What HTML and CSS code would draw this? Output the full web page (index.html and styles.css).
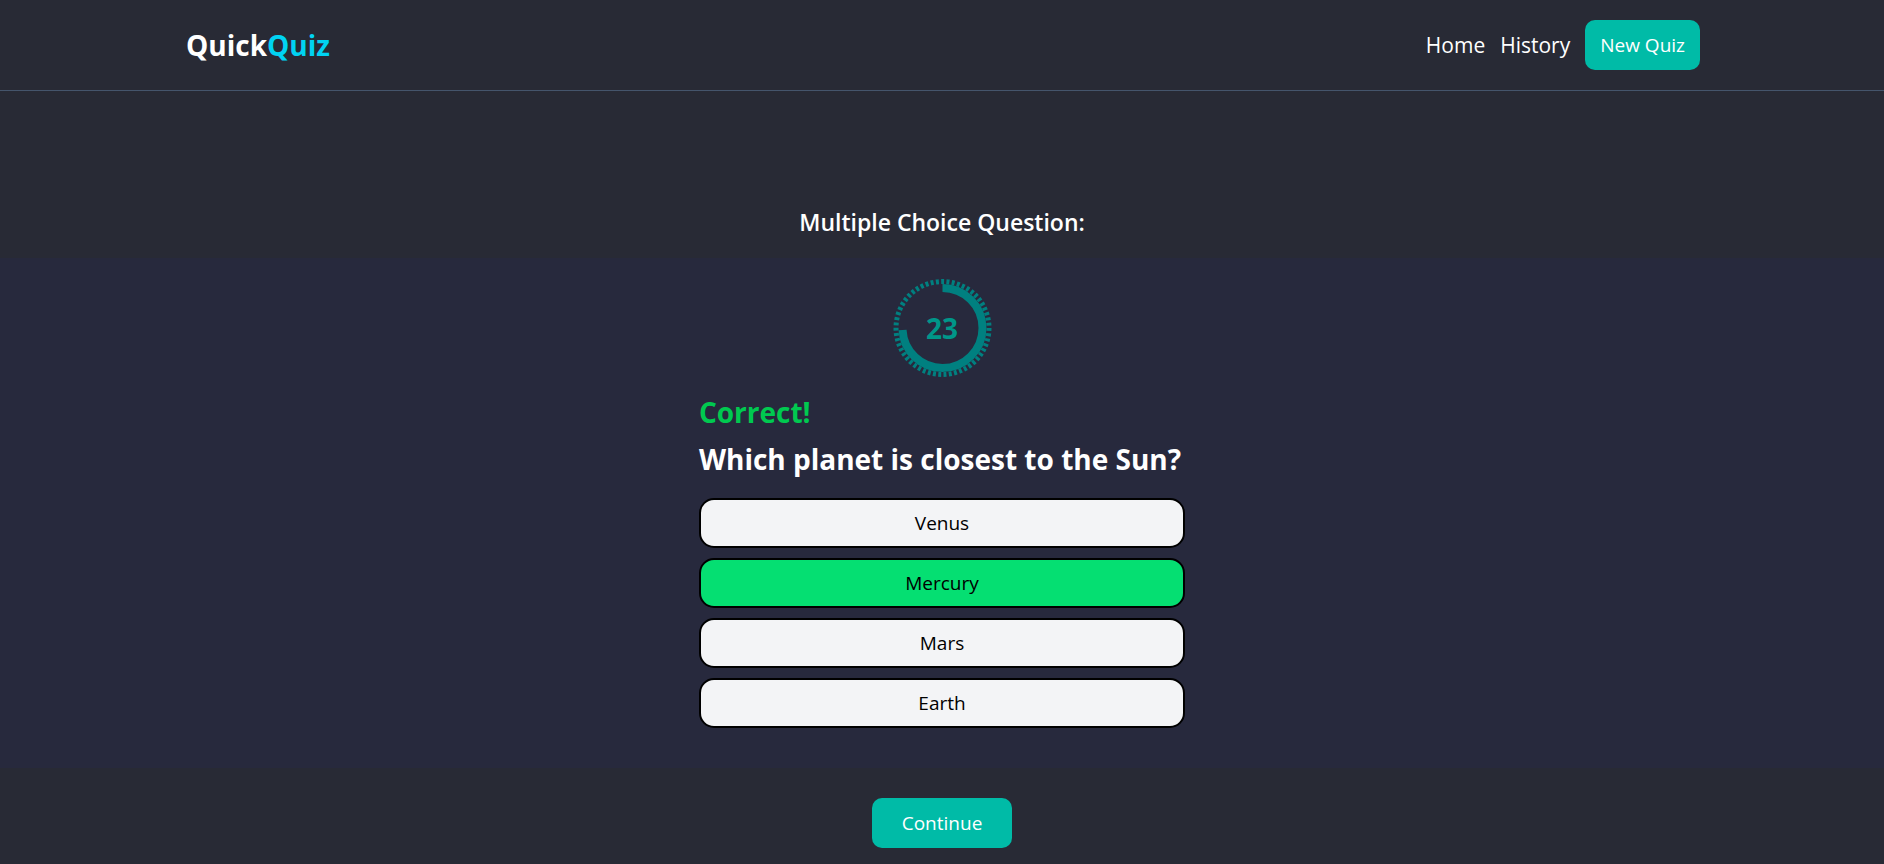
FILE: index.html
```html
<!DOCTYPE html>
<html lang="en">
<head>
<meta charset="utf-8">
<meta name="viewport" content="width=device-width, initial-scale=1">
<title>QuickQuiz</title>
<link rel="stylesheet" href="styles.css">
</head>
<body>
<header class="site-header">
  <div class="container">
    <a class="logo" href="#">Quick<span class="logo-accent">Quiz</span></a>
    <nav class="nav">
      <a class="nav-link" href="#">Home</a>
      <a class="nav-link" href="#">History</a>
      <button class="btn" type="button">New Quiz</button>
    </nav>
  </div>
</header>
<main class="page">
  <h1 class="title">Multiple Choice Question:</h1>
  <section class="quiz">
    <div class="timer">
      <svg class="timer-ring" viewBox="0 0 100 100" aria-hidden="true">
        <circle class="ticks" cx="50.5" cy="50" r="46.5" pathLength="495"/>
        <circle class="arc" cx="50.5" cy="50" r="40" pathLength="360" transform="rotate(-90 50.5 50)"/>
      </svg>
      <span class="timer-value">23</span>
    </div>
    <div class="question">
      <p class="result">Correct!</p>
      <h2 class="prompt">Which planet is closest to the Sun?</h2>
      <div class="options">
        <button class="option" type="button">Venus</button>
        <button class="option option-correct" type="button">Mercury</button>
        <button class="option" type="button">Mars</button>
        <button class="option" type="button">Earth</button>
      </div>
    </div>
  </section>
  <button class="btn btn-wide" type="button">Continue</button>
</main>
</body>
</html>
```
FILE: styles.css
```css
* { box-sizing: border-box; }
body {
  margin: 0;
  min-height: 100vh;
  background: #282a35;
  color: #fff;
  font-family: "Segoe UI", "Open Sans", "Noto Sans", sans-serif;
  font-size: 19px;
  line-height: 30px;
}
h1, h2, p { margin: 0; }
button { font: inherit; cursor: pointer; }
a { color: inherit; text-decoration: none; }
.site-header { border-bottom: 1px solid #45556c; }
.container {
  display: flex;
  align-items: center;
  justify-content: space-between;
  max-width: 1536px;
  margin: 0 auto;
  padding: 20px 10px;
}
.logo { padding-left: 2px; font-size: 28px; font-weight: 700; }
.logo-accent { color: #00d3f2; }
.nav { display: flex; align-items: center; gap: 15px; }
.nav-link { font-size: 21px; }
.btn {
  padding: 10px 15px;
  border: 0;
  border-radius: 10px;
  background: #00bba7;
  color: #fff;
}
.btn-wide { padding: 10px 30px; }
.page {
  display: flex;
  flex-direction: column;
  align-items: center;
  padding: 111px 0 15px;
}
.title { font-size: 23px; font-weight: 600; line-height: 40px; }
.quiz {
  display: flex;
  flex-direction: column;
  align-items: center;
  align-self: stretch;
  gap: 14px;
  margin: 16px 0 30px;
  padding: 20px 0 40px;
  background: #27293d;
}
.timer { display: grid; place-items: center; }
.timer-ring { grid-area: 1 / 1; width: 100px; height: 100px; fill: none; stroke: #008080; }
.ticks { stroke-width: 5; stroke-dasharray: 5 4; }
.arc { stroke-width: 8; stroke-dasharray: 267 93; }
.timer-value { grid-area: 1 / 1; color: #009689; font-size: 28px; font-weight: 700; }
.result { color: #00c950; font-size: 28px; font-weight: 700; line-height: 40px; }
.prompt { margin: 7px 0 19px; padding-right: 4px; font-size: 28px; font-weight: 700; line-height: 40px; }
.options { display: flex; flex-direction: column; gap: 10px; }
.option {
  padding: 8px 20px;
  border: 2px solid #000;
  border-radius: 15px;
  background: #f3f4f6;
  color: #000;
}
.option-correct { background: #05df72; }
```
